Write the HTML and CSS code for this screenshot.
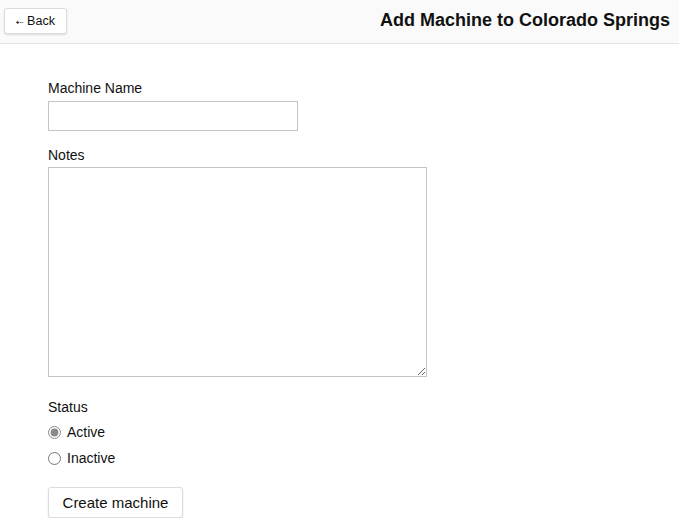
FILE: index.html
```html
<!DOCTYPE html>
<html>
<head>
<meta charset="utf-8">
<link rel="stylesheet" href="styles.css">
</head>
<body>
<header class="topbar">
  <button class="back-btn"><span class="arrow">&#8672;</span> Back</button>
  <h1 class="title">Add Machine to Colorado Springs</h1>
</header>
<main class="form">
  <div class="field">
    <label class="label">Machine Name</label>
    <input class="text-input" type="text">
  </div>
  <div class="field">
    <label class="label">Notes</label>
    <textarea class="notes"></textarea>
  </div>
  <div class="field status">
    <span class="label">Status</span>
    <label class="radio-row"><input type="radio" name="status" checked> Active</label>
    <label class="radio-row"><input type="radio" name="status"> Inactive</label>
  </div>
  <button class="create-btn">Create machine</button>
</main>
</body>
</html>
```
FILE: styles.css
```css
html, body {
  margin: 0;
  padding: 0;
  background: #ffffff;
  font-family: "Liberation Sans", Arial, sans-serif;
  color: #111;
}
.topbar {
  height: 44px;
  box-sizing: border-box;
  background: #fafafa;
  border-bottom: 1px solid #e6e4dc;
  display: flex;
  align-items: center;
  justify-content: space-between;
  padding: 0 9px 0 4px;
}
.back-btn {
  font-family: "Liberation Sans", Arial, sans-serif;
  font-size: 12.5px;
  height: 26px;
  width: 63px;
  margin-top: -2px;
  background: #fff;
  border: 1px solid #dcdcdc;
  border-radius: 3px;
  box-shadow: 0 1px 2px rgba(0,0,0,0.12);
  color: #111;
  padding: 0;
}
.arrow {
  font-family: "DejaVu Sans", sans-serif;
  font-size: 9px;
}
.title {
  margin: 0;
  font-size: 18px;
  font-weight: bold;
  margin-top: -2px;
}
.form {
  padding: 36px 48px 0 48px;
  display: flex;
  flex-direction: column;
  align-items: flex-start;
}
.field {
  display: flex;
  flex-direction: column;
  margin-bottom: 15px;
}
.label {
  font-size: 14px;
  line-height: 16px;
  margin-bottom: 5px;
}
.field + .field .label {
  margin-top: 1px;
  margin-bottom: 4px;
}
.text-input {
  width: 250px;
  height: 30px;
  box-sizing: border-box;
  border: 1px solid #c4c4c4;
  margin: 0;
}
.notes {
  width: 379px;
  height: 210px;
  box-sizing: border-box;
  border: 1px solid #c4c4c4;
  margin: 0;
  resize: both;
}
.status {
  margin-top: 6px;
  margin-bottom: 0;
}
.status .label {
  margin-top: 0;
  margin-bottom: 4px;
}
.radio-row {
  font-size: 14px;
  display: flex;
  align-items: center;
  gap: 6px;
  height: 26px;
}
.radio-row input {
  margin: 0;
  width: 13px;
  height: 13px;
  accent-color: #8a8a8a;
}
.create-btn {
  margin-top: 16px;
  font-family: "Liberation Sans", Arial, sans-serif;
  font-size: 15px;
  width: 135px;
  height: 31px;
  background: #fff;
  border: 1px solid #dcdcdc;
  border-radius: 3px;
  box-shadow: 0 1px 2px rgba(0,0,0,0.12);
  color: #111;
}
```
